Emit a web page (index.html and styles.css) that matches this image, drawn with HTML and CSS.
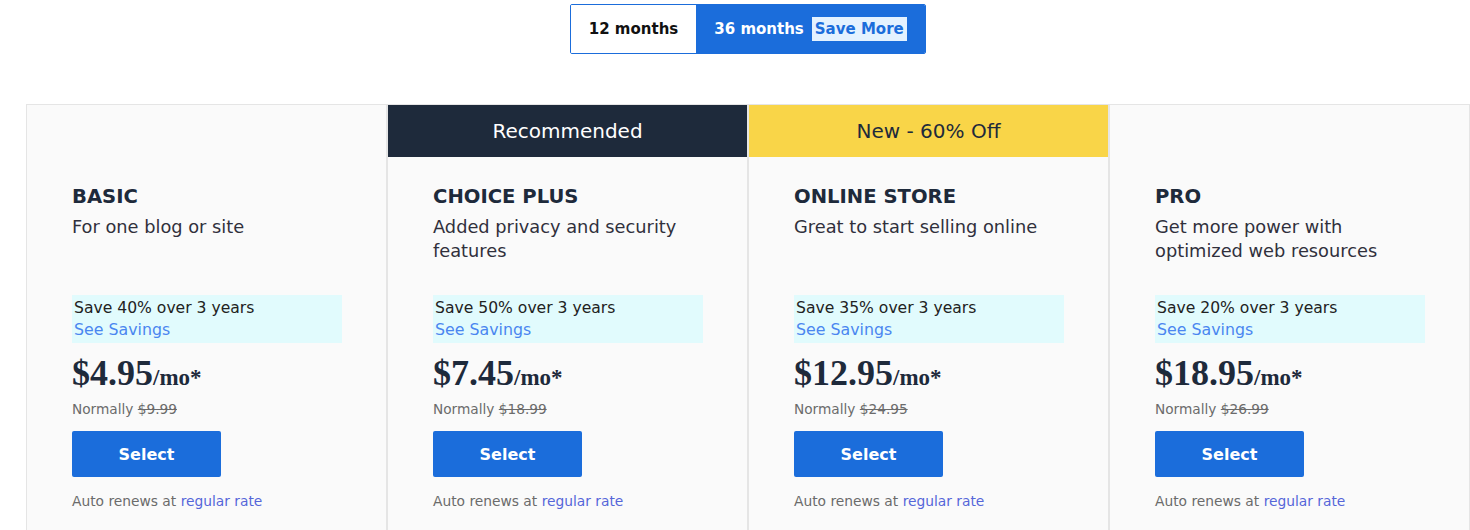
FILE: index.html
```html
<!DOCTYPE html>
<html lang="en">
<head>
<meta charset="utf-8">
<title>Plans</title>
<link rel="stylesheet" href="styles.css">
</head>
<body>
<div class="page">
  <div class="toggle-row">
    <div class="toggle">
      <div class="seg seg-off">12 months</div>
      <div class="seg seg-on">36 months <span class="save-more">Save More</span></div>
    </div>
  </div>
  <div class="cards">
    <div class="card">
      <div class="band"></div>
      <div class="body">
        <h2 class="title">BASIC</h2>
        <p class="desc">For one blog or site</p>
        <div class="savings"><div class="save-text">Save 40% over 3 years</div><div class="see">See Savings</div></div>
        <div class="price"><span class="amt">$4.95</span><span class="per">/mo*</span></div>
        <div class="normal">Normally <s>$9.99</s></div>
        <button class="select">Select</button>
        <div class="renew">Auto renews at <span class="rate">regular rate</span></div>
      </div>
    </div>
    <div class="card">
      <div class="band band-dark">Recommended</div>
      <div class="body">
        <h2 class="title">CHOICE PLUS</h2>
        <p class="desc">Added privacy and security features</p>
        <div class="savings"><div class="save-text">Save 50% over 3 years</div><div class="see">See Savings</div></div>
        <div class="price"><span class="amt">$7.45</span><span class="per">/mo*</span></div>
        <div class="normal">Normally <s>$18.99</s></div>
        <button class="select">Select</button>
        <div class="renew">Auto renews at <span class="rate">regular rate</span></div>
      </div>
    </div>
    <div class="card">
      <div class="band band-yellow">New - 60% Off</div>
      <div class="body">
        <h2 class="title">ONLINE STORE</h2>
        <p class="desc">Great to start selling online</p>
        <div class="savings"><div class="save-text">Save 35% over 3 years</div><div class="see">See Savings</div></div>
        <div class="price"><span class="amt">$12.95</span><span class="per">/mo*</span></div>
        <div class="normal">Normally <s>$24.95</s></div>
        <button class="select">Select</button>
        <div class="renew">Auto renews at <span class="rate">regular rate</span></div>
      </div>
    </div>
    <div class="card">
      <div class="band"></div>
      <div class="body">
        <h2 class="title">PRO</h2>
        <p class="desc">Get more power with optimized web resources</p>
        <div class="savings"><div class="save-text">Save 20% over 3 years</div><div class="see">See Savings</div></div>
        <div class="price"><span class="amt">$18.95</span><span class="per">/mo*</span></div>
        <div class="normal">Normally <s>$26.99</s></div>
        <button class="select">Select</button>
        <div class="renew">Auto renews at <span class="rate">regular rate</span></div>
      </div>
    </div>
  </div>
</div>
</body>
</html>
```

FILE: styles.css
```css
* { box-sizing: border-box; }
html, body { margin: 0; padding: 0; background: #fff; overflow: hidden; }
body { font-family: "DejaVu Sans", "Noto Sans", sans-serif; color: #1e2a3b; }
.page { width: 1444px; margin-left: 26px; padding-top: 4px; }
.toggle-row { display: flex; justify-content: center; }
.toggle { display: flex; height: 50px; border: 1px solid #1b6ddb; border-radius: 2px; overflow: hidden; }
.seg { display: flex; align-items: center; justify-content: center; font-size: 15px; font-weight: bold; }
.seg-off { width: 125px; background: #fff; color: #111; }
.seg-on { width: 229px; background: #1b6ddb; color: #fff; gap: 8px; }
.save-more { background: #e4f2ff; color: #1b6ddb; padding: 3px 3px; }
.cards { display: flex; margin-top: 50px; }
.card { width: 361px; flex: none; border: 1px solid #e5e5e5; border-bottom: none; background: #fafafa; height: 440px; }
.band { height: 52px; display: flex; align-items: center; justify-content: center; font-size: 20px; }
.band-dark { background: #1e2a3b; color: #fff; }
.band-yellow { background: #f9d548; color: #1e2a3b; }
.body { padding: 28px 45px 0; }
.title { margin: 0; font-size: 19.6px; line-height: 24px; font-weight: bold; color: #1e2a3b; }
.desc { margin: 6px 0 0; font-size: 17.8px; line-height: 24px; min-height: 48px; color: #30303c; width: 262px; }
.savings { margin-top: 32px; width: 270px; height: 48px; background: #e1fbfd; padding: 2px 2px; }
.save-text { font-size: 15.6px; line-height: 22px; color: #222; }
.see { font-size: 15.8px; line-height: 22px; color: #4a86f0; }
.price { margin-top: 10px; height: 40px; display: flex; align-items: baseline; font-family: "Liberation Serif", "DejaVu Serif", serif; font-weight: bold; color: #1e2a3b; line-height: 40px; }
.amt { font-size: 36px; }
.per { font-size: 23px; }
.normal { margin-top: 6px; font-size: 13.7px; line-height: 20px; color: #6b6b6b; }
.select { display: block; margin-top: 12px; width: 149px; height: 46px; border: none; border-radius: 2px; background: #1b6ddb; color: #fff; font-family: inherit; font-size: 16px; font-weight: bold; }
.renew { margin-top: 14px; font-size: 13.8px; line-height: 20px; color: #6b6b6b; }
.rate { color: #5566d9; }
```
